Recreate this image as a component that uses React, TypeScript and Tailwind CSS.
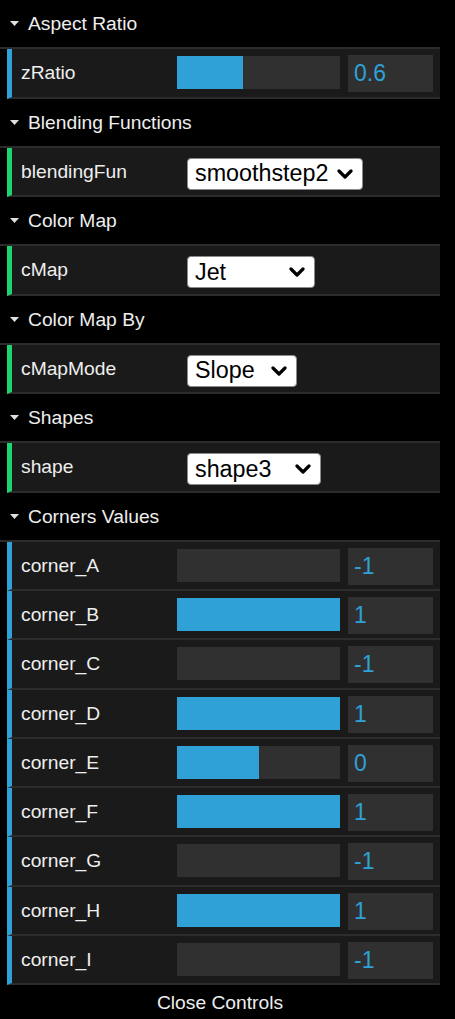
import React from "react";

const FONT = { fontFamily: '"Liberation Sans", Arial, sans-serif' };

function Title({ text }: { text: string }) {
  return (
    <div className="flex h-[49.25px] items-center border-b-2 border-[#2c2c2c] bg-black">
      <svg width="9" height="5" viewBox="0 0 9 5" className="ml-[10px] mr-[9px]">
        <polygon points="0,0 9,0 4.5,5" fill="#e0e0e0" />
      </svg>
      <span className="text-[19.25px] leading-none text-[#eeeeee]">{text}</span>
    </div>
  );
}

function NumberRow({ label, fill, value }: { label: string; fill: number; value: string }) {
  return (
    <div className="ml-[7px] flex h-[49.25px] items-start border-b-2 border-l-[5px] border-[#2c2c2c] border-l-[#2fa1d6] bg-[#1a1a1a] pl-[9px] pr-[7px]">
      <div className="flex h-[47.25px] w-[156px] items-center text-[19.25px] leading-none text-[#eeeeee]">
        {label}
      </div>
      <div className="mt-[7px] h-[33px] w-[163px] bg-[#303030]">
        <div className="h-full bg-[#2fa1d6]" style={{ width: `${fill}px` }} />
      </div>
      <div className="ml-[8px] mt-[6px] flex h-[37px] w-[85px] items-center bg-[#303030] pl-[6px] text-[23px] leading-none text-[#2fa1d6]">
        {value}
      </div>
    </div>
  );
}

function SelectRow({ label, value, width }: { label: string; value: string; width: string }) {
  return (
    <div className="ml-[7px] flex h-[49.25px] items-start border-b-2 border-l-[5px] border-[#2c2c2c] border-l-[#1ed36f] bg-[#1a1a1a] pl-[9px] pr-[7px]">
      <div className="flex h-[47.25px] w-[156px] items-center text-[19.25px] leading-none text-[#eeeeee]">
        {label}
      </div>
      <div
        className={`ml-[10px] mt-[10px] flex h-[32px] items-center justify-between rounded-[4px] border border-[#8a8a8a] bg-white pl-[7px] pr-[9px] text-[23.3px] leading-none text-black ${width}`}
      >
        <span>{value}</span>
        <svg width="16" height="10" viewBox="0 0 16 10">
          <polyline points="2,2 8,8 14,2" fill="none" stroke="#000" strokeWidth="3.2" strokeLinecap="round" strokeLinejoin="round" />
        </svg>
      </div>
    </div>
  );
}

export default function App() {
  const corners: [string, number, string][] = [
    ["corner_A", 0, "-1"],
    ["corner_B", 163, "1"],
    ["corner_C", 0, "-1"],
    ["corner_D", 163, "1"],
    ["corner_E", 81.5, "0"],
    ["corner_F", 163, "1"],
    ["corner_G", 0, "-1"],
    ["corner_H", 163, "1"],
    ["corner_I", 0, "-1"],
  ];
  return (
    <div className="min-h-screen w-full bg-black" style={FONT}>
      <div className="w-[440px]">
        <Title text="Aspect Ratio" />
        <NumberRow label="zRatio" fill={66} value="0.6" />
        <Title text="Blending Functions" />
        <SelectRow label="blendingFun" value="smoothstep2" width="w-[176px]" />
        <Title text="Color Map" />
        <SelectRow label="cMap" value="Jet" width="w-[128px]" />
        <Title text="Color Map By" />
        <SelectRow label="cMapMode" value="Slope" width="w-[110px]" />
        <Title text="Shapes" />
        <SelectRow label="shape" value="shape3" width="w-[134px]" />
        <Title text="Corners Values" />
        {corners.map(([l, f, v]) => (
          <NumberRow key={l} label={l} fill={f} value={v} />
        ))}
        <div className="flex h-[35px] items-center justify-center bg-black text-[19.25px] leading-none text-[#eeeeee]">
          Close Controls
        </div>
      </div>
    </div>
  );
}
